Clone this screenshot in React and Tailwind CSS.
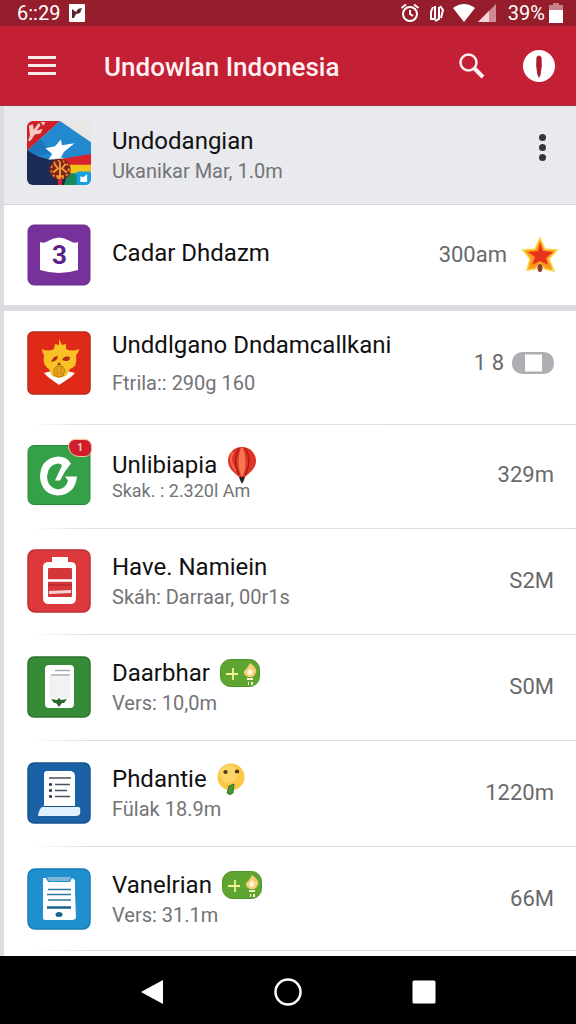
import React from 'react';
import clsx from 'clsx';

const FlagIcon = () => (
    <svg viewBox="0 0 66 66" className="w-16 h-16 shrink-0 rounded-md" aria-hidden="true">
        <rect width="66" height="66" fill="#e9e6e4" />
        <path d="M0 0H34L0 31Z" fill="#cf2027" />
        <path d="M2 5l4-2 1 6 5-7 2 2-4 6 6-2-2 5-6 1-4 6-3 1 2-6z M14 1h5l-2 4z" fill="#f5c9c4" />
        <path d="M0 31L34 0 66 22V42L36 38 16 40Z" fill="#2389cf" />
        <path d="M0 31L14 18 24 34 8 36Z" fill="#1b78bd" />
        <path d="M66 34V45H44L36 39Z" fill="#d8232a" />
        <path d="M0 30Q16 42 34 39L46 46V66H0Z" fill="#1c2b56" />
        <path d="M28 40L66 44V48H42Z" fill="#d8232a" />
        <path d="M42 45H66V54H44Z" fill="#f3c21b" />
        <path d="M42 54H66V66H38Z" fill="#188a5a" />
        <path d="M19 28l10-2 6-7 1 6 13-2-11 9-3 6-13 2 4-6z" fill="#fff" />
        <circle cx="34" cy="50" r="11" fill="#7c2418" />
        <circle cx="34" cy="50" r="9" fill="none" stroke="#e58a35" strokeWidth="2" strokeDasharray="2 3" />
        <path d="M28 44l4 5-5 4 M40 44l-4 5 5 4 M34 42v18 M30 57h8" fill="none" stroke="#f09a3c" strokeWidth="2" />
        <path d="M32 60h4v6h-4z" fill="#d8232a" />
        <rect x="51" y="52" width="15" height="14" rx="2" fill="#18a0e0" />
        <path d="M55 62v-5l3 1 4-3v8h-7z" fill="#fff" />
    </svg>
);

const CalendarIcon = () => (
    <svg viewBox="0 0 64 62" className="w-16 h-16 shrink-0" aria-hidden="true">
        <rect x="1" y="1" width="62" height="60" rx="6" fill="#78309b" stroke="#67308b" />
        <path d="M13 18q4 2 8-1 11-7 22 0 4 3 8 1v28q-19 6-38 0z" fill="#fff" />
        <text x="32.5" y="40" textAnchor="middle" fontSize="26" fontWeight="700" fontFamily="Roboto, sans-serif" fill="#5b2387">3</text>
    </svg>
);

const GarudaIcon = () => (
    <svg viewBox="0 0 64 64" className="w-16 h-16 shrink-0" aria-hidden="true">
        <rect x="1" y="1" width="62" height="62" rx="5" fill="#df2a18" stroke="#b92b20" strokeWidth="1.5" />
        <path d="M17 42l15-4 16 4-4 4-12 8-11-8z" fill="#fff" />
        <path
            d="M32 8l3 6 4-1v5q6 3 13 0-1 5-3 6 2 12-6 14l-4 7-7 2-7-2-3-7q-7-4-5-14-2-2-2-6 6 3 12 0l1-5 4 1z"
            fill="#f9c126"
        />
        <path d="M24 31q2-6 7-6 0 5-7 6z M35 29q2-5 8-3 0 6-8 3z" fill="#b52b14" />
        <path d="M30 34l2-3 2 3z" fill="#8d3a12" />
        <path d="M27 38l3-3h5l3 4-2 6-5 1-4-2z" fill="#e6a41b" stroke="#b97a13" />
        <path d="M30 37v7 M34 36v8" stroke="#c98a17" />
    </svg>
);

const MessengerIcon = () => (
    <div className="relative shrink-0">
        <svg viewBox="0 0 64 61" className="w-16 h-16" aria-hidden="true">
            <rect x="1" y="1" width="62" height="59" rx="6" fill="#34a047" stroke="#2a8a3c" />
            <path d="M44 19Q40 12 31 12Q13 14 13 33Q15 50 31 51Q48 50 50 32L38 32 41 36Q39 44 31 45Q20 43 20 32Q21 20 31 19Q34 19 35 21L28 36 33 36 38 27Z" fill="#fff" />
        </svg>
        <span className="absolute -top-1 -right-px w-6 h-[18px] rounded-lg rounded-bl-xl border border-[#f3c3a2] bg-[#cf1f2b] text-[10px] leading-4 text-center font-bold text-[#fbd5d0]">
            1
        </span>
    </div>
);

const BatteryIcon = () => (
    <svg viewBox="0 0 64 64" className="w-16 h-16 shrink-0" aria-hidden="true">
        <rect x="1" y="1" width="62" height="62" rx="7" fill="#dd383b" stroke="#b92f33" strokeWidth="1.5" />
        <path d="M25 8h16v5h4q4 1 4 5v31q0 6-6 6H22q-6 0-6-6V18q0-4 4-5h5z" fill="#fff" />
        <rect x="21" y="19" width="24" height="29" rx="1" fill="#d4363a" />
        <path d="M21 31.500h24" stroke="#fff" strokeWidth="2.500" />
        <path d="M22 42l22-1v3l-22 1z" fill="#f7d5d4" />
        <path d="M21 36h24" stroke="#bf2a31" strokeWidth="2" />
    </svg>
);

const PhoneIcon = () => (
    <svg viewBox="0 0 64 62" className="w-16 h-16 shrink-0" aria-hidden="true">
        <rect x="1" y="1" width="62" height="60" rx="6" fill="#368b36" stroke="#2c742e" strokeWidth="1.5" />
        <rect x="18" y="9" width="29" height="43" rx="4" fill="#fff" />
        <rect x="22" y="20" width="21" height="22" fill="#f1f2f4" />
        <path d="M28 14.500h15 M24 19h19" stroke="#a9adb1" strokeWidth="1.300" />
        <path d="M24 43l6 1 2-2 2 2 6-1-3 4h-2l-3 4-3-4h-2z" fill="#27692b" />
    </svg>
);

const DocumentIcon = () => (
    <svg viewBox="0 0 64 62" className="w-16 h-16 shrink-0" aria-hidden="true">
        <rect x="1" y="1" width="62" height="60" rx="6" fill="#1a61a5" stroke="#18548f" strokeWidth="1.5" />
        <path d="M17 12q0-3 3-3h24q4 1 4 5v30H17z" fill="#fff" />
        <path d="M15 45h37q2 1 1 7-1 2-4 2H11q1-7 4-9z" fill="#def1fc" />
        <path d="M18 44.500h29" stroke="#17528b" />
        <path d="M22 16h22 M28 22.500h15 M28 28.500h12 M28 34.500h15" stroke="#48525f" strokeWidth="1.500" />
        <path d="M22 22.500h3 M22 28.500h3 M22 34.500h3" stroke="#2d3a4a" strokeWidth="2.500" />
    </svg>
);

const ReaderIcon = () => (
    <svg viewBox="0 0 64 62" className="w-16 h-16 shrink-0" aria-hidden="true">
        <rect x="1" y="1" width="62" height="60" rx="7" fill="#1f90cd" stroke="#167db9" strokeWidth="1.5" />
        <path d="M16 10h3l2 4h22l2-4 3 2v12l1 26q-1 2-4 2H18q-2 0-2-2z" fill="#fff" />
        <path d="M20 9h24l-2 4H22z" fill="#7bb7d8" />
        <path d="M21 21.500h23 M20 26.500h24 M21 32h23" stroke="#2c789e" strokeWidth="1.600" />
        <path d="M20 39.500h24" stroke="#176491" strokeWidth="2.500" />
        <ellipse cx="32" cy="46.500" rx="3.500" ry="2.500" fill="#176491" />
    </svg>
);

const StarIcon = () => (
    <svg viewBox="0 0 36 36" className="w-9 h-9" aria-hidden="true">
        <path d="M18 1l5 11 12 1-8 9 5 12-9-2-5-5-5 5-8 1 3-11-7-9 12-1z" fill="#fa9b20" stroke="#fbd84b" strokeWidth="1.500" />
        <path d="M18 5l3 9 10 1-7 6 2 7-8-4-8 4 3-8-7-5 10-1z" fill="#e5341b" />
        <ellipse cx="18" cy="31" rx="2.500" ry="4" fill="#8d3c32" />
    </svg>
);

const ToggleIcon = () => (
    <svg viewBox="0 0 42 24" className="w-[42px] h-6" aria-hidden="true">
        <rect x="0" y="1" width="42" height="22" rx="10" fill="#adafb2" />
        <rect x="13" y="3.500" width="17" height="17" fill="#fff" />
    </svg>
);

const BalloonIcon = () => (
    <svg viewBox="0 0 30 38" className="w-[30px] h-[38px]" aria-hidden="true">
        <path d="M15 1C6 1 1 8 1 15c0 8 7 12 11 16h6c4-4 11-8 11-16C29 8 24 1 15 1z" fill="#e03427" />
        <path d="M12 2q-7 12 0 27 M18 2q8 12 0 27" fill="none" stroke="#9e2019" strokeWidth="1.300" />
        <path d="M14 2q-5 13 0 28h2q5-14 0-28z" fill="#fb7650" />
        <path d="M6 6q-5 9 3 19" fill="none" stroke="#f6654b" strokeWidth="2" />
        <path d="M12 31h6l-1 3-2 4-2-4z" fill="#30201c" />
    </svg>
);

const BulbBadge = () => (
    <svg viewBox="0 0 40 28" className="w-10 h-7" aria-hidden="true">
        <rect x="0.500" y="0.500" width="39" height="27" rx="10" fill="#5fa532" stroke="#4d9128" />
        <path d="M6 15h12 M13 9v12" stroke="#f3f190" strokeWidth="1.800" />
        <path d="M30 4q7 5 6 9-1 4-4 5h-4q-5-2-4-6 3-2 6-8z" fill="#f6cf72" />
        <path d="M30 9l3 4-2 3h-3l-1-3z" fill="#fff5da" />
        <path d="M27 19h6v2h-6z M28 23h1v3h-1z M31 23h2v3h-2z" fill="#f7f3cb" />
    </svg>
);

const FaceIcon = () => (
    <svg viewBox="0 0 28 32" className="w-7 h-8" aria-hidden="true">
        <circle cx="14" cy="14" r="13.500" fill="#fbc744" />
        <circle cx="12" cy="11" r="9" fill="#fdd667" />
        <ellipse cx="8.500" cy="9" rx="2.200" ry="2" fill="#4e3b1c" />
        <ellipse cx="20" cy="8.500" rx="2.200" ry="2" fill="#4e3b1c" />
        <path d="M12 23l5-2-1 9q-3 3-6 0z" fill="#4a9435" stroke="#347b2a" />
    </svg>
);

const groupTop = [
    {
        title: 'Undodangian',
        sub: 'Ukanikar Mar, 1.0m',
        icon: FlagIcon,
        menu: true,
        row: 'bg-[#e8eaed] pt-[15px] pb-[19px] border-b border-[#d3d5d8]',
        text: 'pt-1',
    },
    {
        title: 'Cadar Dhdazm',
        icon: CalendarIcon,
        size: '300am',
        extra: StarIcon,
        row: 'pt-[18px] pb-[18px]',
        text: 'pb-1',
    },
];

const groupApps = [
    {
        title: 'Unddlgano Dndamcallkani',
        sub: 'Ftrila:: 290g 160',
        icon: GarudaIcon,
        size: '1 8',
        extra: ToggleIcon,
        row: 'pt-[18px] pb-[27px]',
        text: 'gap-2',
    },
    {
        title: 'Unlibiapia',
        sub: 'Skak. : 2.320l Am',
        icon: MessengerIcon,
        mark: BalloonIcon,
        size: '329m',
        row: 'pt-[18px] pb-[21px]',
        small: true,
    },
    { title: 'Have. Namiein', sub: 'Skáh: Darraar, 00r1s', icon: BatteryIcon, size: 'S2M' },
    { title: 'Daarbhar', sub: 'Vers: 10,0m', icon: PhoneIcon, mark: BulbBadge, size: 'S0M' },
    { title: 'Phdantie', sub: 'Fülak 18.9m', icon: DocumentIcon, mark: FaceIcon, size: '1220m' },
    { title: 'Vanelrian', sub: 'Vers: 31.1m', icon: ReaderIcon, mark: BulbBadge, size: '66M', row: 'pt-5 pb-[19px]' },
];

const Row = ({ item, divider }) => {
    const { icon: Icon, mark: Mark, extra: Extra } = item;
    return (
        <li>
            <div className={clsx('flex items-center pl-[23px] pr-[22px]', item.row || 'pt-5 pb-[21px]')}>
                <Icon />
                <div className={clsx('flex flex-col flex-1 min-w-0 ml-[21px]', item.text)}>
                    <div className="flex items-center gap-2.5 h-8">
                        <h2 className="text-2xl leading-8 text-[#111] whitespace-nowrap">{item.title}</h2>
                        {Mark && <Mark />}
                    </div>
                    {item.sub && (
                        <p
                            className={clsx(
                                'whitespace-nowrap text-[#737477]',
                                item.small ? 'text-lg leading-5' : 'text-xl leading-7'
                            )}
                        >
                            {item.sub}
                        </p>
                    )}
                </div>
                {item.size && <span className="text-[22px] leading-7 text-[#68696b] whitespace-nowrap">{item.size}</span>}
                {Extra && (
                    <span className={clsx('shrink-0', item.extra === StarIcon ? 'ml-[15px] -mr-1' : 'ml-2')}>
                        <Extra />
                    </span>
                )}
                {item.menu && (
                    <button type="button" aria-label="More options" className="flex flex-col items-center gap-[3px] w-6 pb-3">
                        <span className="w-[7px] h-[7px] rounded-full bg-[#35363a]" />
                        <span className="w-[7px] h-[7px] rounded-full bg-[#35363a]" />
                        <span className="w-[7px] h-[7px] rounded-full bg-[#35363a]" />
                    </button>
                )}
            </div>
            {divider && <div className="ml-7 h-px bg-linear-to-r from-white via-[#dfe0e2] via-10% to-[#dcdde0]" />}
        </li>
    );
};

const StatusBar = () => (
    <div className="flex items-center justify-between h-[26px] pl-[17px] pr-[13px] bg-[#951d2c] text-white">
        <div className="flex items-center gap-[9px]">
            <span className="text-xl leading-6">6::29</span>
            <svg viewBox="0 0 16 18" className="w-4 h-[18px]" aria-hidden="true">
                <rect width="16" height="18" rx="1" fill="#fff" />
                <path d="M3 5l4 3 2-3 4-1-2 5-4 1-2 4H3z" fill="#59202a" />
            </svg>
        </div>
        <div className="flex items-center">
            <svg viewBox="0 0 20 20" className="w-5 h-5" fill="none" stroke="#fff" strokeWidth="2" aria-hidden="true">
                <circle cx="10" cy="11" r="7" />
                <path d="M1.500 5L6 1.500 M18.500 5L14 1.500 M10 7v4l3 2" />
            </svg>
            <svg viewBox="0 0 16 18" className="w-4 h-[18px] ml-[9px]" fill="none" stroke="#fff" strokeWidth="2" aria-hidden="true">
                <path d="M4 3L2 8v7h4 M6 2v13 M10 3v12l-4 2 M11 2l3 4-2 8" />
            </svg>
            <svg viewBox="0 0 22 18" className="w-[22px] h-[18px] ml-2" aria-hidden="true">
                <path d="M0 4Q11-4 22 4L11 18Z" fill="#fff" />
            </svg>
            <svg viewBox="0 0 18 18" className="w-[18px] h-[18px] ml-[3px]" aria-hidden="true">
                <path d="M0 18L18 0V18Z" fill="#cf8b93" />
                <path d="M0 18L11 7V18Z" fill="#f5d5d8" />
            </svg>
            <span className="ml-3 text-xl leading-6">39%</span>
            <svg viewBox="0 0 14 20" className="w-3.5 h-5 ml-1" aria-hidden="true">
                <path d="M4 0h6v2h4v6H0V2h4z" fill="#c98189" />
                <path d="M0 7h14v13H0z" fill="#fff" />
            </svg>
        </div>
    </div>
);

const AppBar = () => (
    <header className="flex items-center h-20 pl-7 pr-[21px] bg-[#c32036] border-b border-[#a92c3c]">
        <button type="button" aria-label="Open menu" className="flex flex-col gap-[5px] w-7">
            <span className="h-[3px] bg-[#fde8ea]" />
            <span className="h-[3px] bg-[#fde8ea]" />
            <span className="h-[3px] bg-[#fde8ea]" />
        </button>
        <h1 className="flex-1 ml-12 pt-0.5 text-[26px] leading-8 font-medium text-[#fff0f1] whitespace-nowrap">
            Undowlan Indonesia
        </h1>
        <button type="button" aria-label="Search">
            <svg viewBox="0 0 28 28" className="w-7 h-7" fill="none" stroke="#fff0f1" aria-hidden="true">
                <circle cx="10.500" cy="10.500" r="8" strokeWidth="2.500" />
                <path d="M16 16l9 9" strokeWidth="4" />
            </svg>
        </button>
        <button type="button" aria-label="Account" className="ml-[37px]">
            <svg viewBox="0 0 34 34" className="w-8 h-8" aria-hidden="true">
                <circle cx="17" cy="17" r="17" fill="#fff" />
                <path d="M15 8q2-3 4 0 1 9-1 18l-1 2-1-2q-2-9-1-18z" fill="#aa1c2e" stroke="#aa1c2e" strokeWidth="1.500" />
            </svg>
        </button>
    </header>
);

const NavBar = () => (
    <nav className="flex items-center justify-center h-[68px] pt-1 gap-[110px] bg-black">
        <button type="button" aria-label="Back">
            <svg viewBox="0 0 24 26" className="w-6 h-[26px]" aria-hidden="true">
                <path d="M1 13L23 1V25Z" fill="#fff" />
            </svg>
        </button>
        <button type="button" aria-label="Home">
            <svg viewBox="0 0 28 28" className="w-7 h-7" aria-hidden="true">
                <circle cx="14" cy="14" r="12.500" fill="none" stroke="#fff" strokeWidth="2.500" />
            </svg>
        </button>
        <button type="button" aria-label="Recent apps">
            <svg viewBox="0 0 24 24" className="w-6 h-6" aria-hidden="true">
                <rect x="0.500" y="0.500" width="23" height="23" rx="1.500" fill="#fff" />
            </svg>
        </button>
    </nav>
);

const App = () => {
    return (
        <div className="flex flex-col min-h-screen bg-[#dcdde0] font-[Roboto,sans-serif]">
            <StatusBar />
            <AppBar />
            <main className="flex flex-col flex-1 gap-1.5 pl-1">
                <ul className="bg-white">
                    {groupTop.map((item) => (
                        <Row key={item.title} item={item} />
                    ))}
                </ul>
                <ul className="flex-1 bg-white">
                    {groupApps.map((item) => (
                        <Row key={item.title} item={item} divider />
                    ))}
                </ul>
            </main>
            <NavBar />
        </div>
    );
};

export default App;
